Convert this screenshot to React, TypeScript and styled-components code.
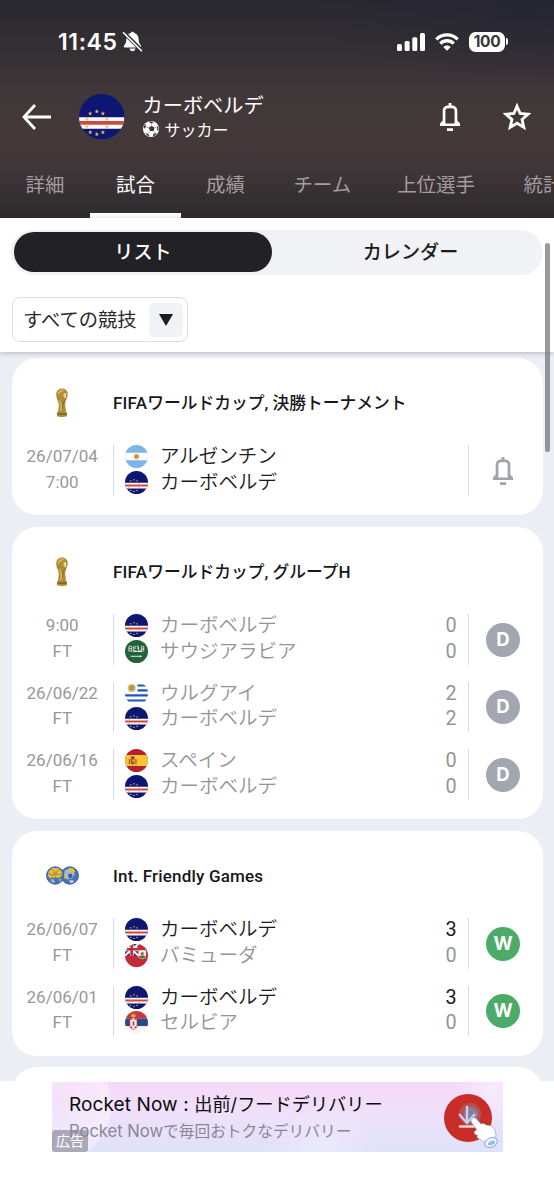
import React from 'react';
import styled, { createGlobalStyle } from 'styled-components';

const jp = `'Noto Sans CJK JP', sans-serif`;
const latin = `Roboto, 'Noto Sans CJK JP', sans-serif`;

const GlobalStyle = createGlobalStyle`
  * { box-sizing: border-box; }
  body { margin: 0; background: #fff; font-family: ${jp}; color: #1c1c20; }
  svg { display: block; flex: none; }
`;

const Screen = styled.div`
  position: relative;
  width: 554px;
  height: 1200px;
  overflow: hidden;
  display: flex;
  flex-direction: column;
  background: #ebeef4;
`;

const Header = styled.header`
  flex: none;
  height: 218px;
  display: flex;
  flex-direction: column;
  color: #fff;
  background:
    radial-gradient(ellipse 260px 90px at 100% 0, rgba(32, 33, 54, 0.55), transparent),
    linear-gradient(#2a2830 0, #343033 50px, #40373a 90px, #43393a 130px, #41373a 165px, #2d2a2d 218px);
`;

const StatusBar = styled.div`
  height: 83px;
  padding: 0 46px 0 58px;
  display: flex;
  align-items: center;
`;

const Clock = styled.span`
  font: 600 23px/26px Inter, sans-serif;
  letter-spacing: 0.6px;
  width: 64px;
`;

const StatusIcons = styled.div`
  margin-left: auto;
  display: flex;
  align-items: center;
  gap: 10px;
`;

const Battery = styled.div`
  display: flex;
  align-items: center;
  gap: 1px;
`;

const BatteryBody = styled.span`
  width: 36px;
  height: 20px;
  border-radius: 6.5px;
  background: #fff;
  color: #37323a;
  font: 700 15.5px/20px Inter, sans-serif;
  letter-spacing: -0.4px;
  text-align: center;
`;

const BatteryNub = styled.span`
  width: 2px;
  height: 7px;
  border-radius: 0 3px 3px 0;
  background: #fff;
`;

const TeamBar = styled.div`
  height: 68px;
  padding: 0 23px 0 22px;
  display: flex;
  align-items: center;
`;

const TeamLogo = styled.div`
  margin-left: 28px;
`;

const TeamHeading = styled.div`
  margin-left: 18px;
  display: flex;
  flex-direction: column;
`;

const TeamTitle = styled.h1`
  margin: 0;
  font: 400 20.2px/26px ${jp};
`;

const Sport = styled.div`
  display: flex;
  align-items: center;
  gap: 6px;
  font-size: 16px;
  line-height: 22px;
  padding-bottom: 2px;
`;

const TeamActions = styled.div`
  margin-left: auto;
  display: flex;
  align-items: center;
  gap: 43px;
`;

const Tabs = styled.nav`
  height: 67px;
  display: flex;
  overflow: hidden;
`;

const Tab = styled.a<{ $width: number; $active?: boolean }>`
  flex: none;
  width: ${p => p.$width}px;
  padding-top: 18px;
  border-bottom: 5px solid ${p => (p.$active ? '#fff' : 'transparent')};
  font-size: 19.4px;
  line-height: 30px;
  text-align: center;
  white-space: nowrap;
  color: ${p => (p.$active ? '#fff' : '#a39da0')};
`;

const Filters = styled.section`
  position: relative;
  flex: none;
  height: 134px;
  padding: 12px 11px 10px;
  background: #fff;
  box-shadow: 0 1px 5px rgba(60, 65, 85, 0.32);
`;

const Segmented = styled.div`
  height: 44.5px;
  padding: 2px 3px;
  display: flex;
  border-radius: 23px;
  background: #f1f2f6;
`;

const Segment = styled.button<{ $active?: boolean }>`
  flex: ${p => (p.$active ? '0 0 258px' : '1')};
  height: 40px;
  border: 0;
  padding: 0 0 2px ${p => (p.$active ? 0 : 9)}px;
  border-radius: 20px;
  font: 500 19.1px/36px ${jp};
  background: ${p => (p.$active ? '#212126' : 'transparent')};
  color: ${p => (p.$active ? '#fff' : '#1c1c20')};
`;

const Select = styled.div`
  margin: 22.5px 0 0 0.5px;
  width: 176.5px;
  height: 45px;
  padding: 0 4px 0 10.5px;
  display: flex;
  align-items: center;
  justify-content: space-between;
  border: 1px solid #dcdce0;
  border-radius: 8px;
`;

const SelectValue = styled.span`
  padding-bottom: 2px;
  font-size: 19.3px;
  line-height: 38px;
  color: #2a2a2e;
`;

const SelectArrow = styled.span`
  width: 34px;
  height: 34px;
  display: flex;
  align-items: center;
  justify-content: center;
  border-radius: 5px;
  background: #f0f2f6;
`;

const CardList = styled.main`
  flex: 1;
  min-height: 0;
  overflow: hidden;
  padding: 6px 11.5px 0;
  display: flex;
  flex-direction: column;
  gap: 11.6px;
`;

const Card = styled.section`
  flex: none;
  padding-bottom: 19.3px;
  border-radius: 25px;
  background: #fff;
`;

const CardHeader = styled.div`
  height: 87.3px;
  padding-top: 2px;
  display: flex;
  align-items: center;
`;

const CardIcon = styled.div`
  width: 101.5px;
  display: flex;
  justify-content: center;
`;

const CardTitle = styled.h2`
  margin: 0;
  font: 500 16.75px/24px ${latin};
  color: #17171b;
  white-space: pre;
`;

const Latin = styled.span<{ $size?: number; $spacing?: number }>`
  font-size: ${p => p.$size ?? 17}px;
  letter-spacing: ${p => p.$spacing ?? 0}px;
`;

const MatchList = styled.div`
  display: flex;
  flex-direction: column;
  gap: 16.9px;
`;

const Match = styled.div`
  height: 50.7px;
  display: grid;
  grid-template-columns: 101.5px 1fr 74px;
`;

const Schedule = styled.div`
  display: flex;
  flex-direction: column;
  align-items: center;
  font: 400 17px/25.4px ${latin};
  color: #97979b;
  margin-top: -1px;
`;

const Sides = styled.div`
  border: solid #dadade;
  border-width: 0 1px;
  padding: 0 11px;
`;

const Side = styled.div<{ $strong?: boolean }>`
  height: 25.35px;
  display: flex;
  align-items: flex-start;
  font-weight: 350;
  color: ${p => (p.$strong ? '#1a1a1e' : '#949498')};
`;

const SideName = styled.span`
  margin-left: 12px;
  font-size: 19.5px;
  line-height: 20px;
`;

const Score = styled.span`
  margin-left: auto;
  font: 400 19.8px/23px Roboto, sans-serif;
`;

const Outcome = styled.div`
  display: flex;
  align-items: center;
  justify-content: center;
  padding-right: 5px;
`;

const Badge = styled.span<{ $win?: boolean }>`
  width: 34px;
  height: 34px;
  border-radius: 50%;
  font: 700 18.5px/33px Inter, sans-serif;
  text-align: center;
  color: #fff;
  background: ${p => (p.$win ? '#4dab68' : '#a2a6b0')};
`;

const ScrollThumb = styled.div`
  position: absolute;
  right: 4px;
  top: 243px;
  width: 5px;
  height: 209px;
  border-radius: 3px;
  background: rgba(115, 115, 118, 0.72);
`;

const AdArea = styled.footer`
  flex: none;
  height: 119px;
  padding: 1px 51px 0 52px;
  background: #fff;
`;

const Banner = styled.div`
  position: relative;
  height: 70px;
  padding: 0 5px 0 17px;
  display: flex;
  align-items: center;
  justify-content: space-between;
  overflow: hidden;
  background:
    radial-gradient(circle at 2px 23px, rgba(255, 255, 255, 0.1) 0, rgba(255, 255, 255, 0.4) 56px, transparent 58px),
    radial-gradient(circle at 270px 80px, rgba(255, 255, 255, 0.35) 0, transparent 60px),
    radial-gradient(circle at 440px 10px, rgba(255, 255, 255, 0.45) 0, transparent 34px),
    linear-gradient(#f5d9f8, #efe0fa 45%, #dfe1fa);
`;

const AdCopy = styled.div`
  padding-top: 2px;
  white-space: pre;
`;

const AdTitle = styled.div`
  font: 400 18.2px/26px Inter, ${jp};
  color: #0c0b10;
`;

const AdText = styled.div`
  font: 400 15.7px/26px Inter, ${jp};
  color: #8b8595;
`;

const DownloadSlot = styled.div`
  padding-top: 3px;
`;

const AdTag = styled.span`
  position: absolute;
  left: 0;
  bottom: 0;
  width: 36px;
  height: 22px;
  border-radius: 3px;
  background: rgba(140, 136, 153, 0.68);
  color: #fff;
  font: 400 14px/21px ${jp};
  text-align: center;
`;

const ringStars = [
  [9.4, 9.2], [12.6, 10.3], [5.9, 10.3], [14.7, 13.2], [4.1, 13.2],
  [14.7, 17.1], [4.1, 17.1], [12.6, 20.2], [5.9, 20.2], [9.4, 21.2],
];

const starPoints = (cx: number, cy: number, r: number, inner = 0.4) =>
  Array.from({ length: 10 }, (_, i) => {
    const a = (Math.PI / 5) * i - Math.PI / 2;
    const d = i % 2 ? r * inner : r;
    return `${(cx + d * Math.cos(a)).toFixed(2)},${(cy + d * Math.sin(a)).toFixed(2)}`;
  }).join(' ');

type Country = 'cv' | 'ar' | 'sa' | 'uy' | 'es' | 'bm' | 'rs';

const flagArt: Record<Country, React.ReactNode> = {
  cv: (
    <>
      <path fill="#0d1673" d="M0 0h24v24H0z" />
      <path fill="#fff" d="M0 12.2h24v6.1H0z" />
      <path fill="#d0493f" d="M0 14.2h24v2H0z" />
      {ringStars.map(([x, y]) => (
        <polygon key={`${x}-${y}`} points={starPoints(x, y, 1.25)} fill="#efc34d" />
      ))}
    </>
  ),
  ar: (
    <>
      <path fill="#7db5e6" d="M0 0h24v24H0z" />
      <path fill="#fff" d="M0 8h24v8H0z" />
      <circle cx="12" cy="12" r="3" fill="#e0b868" />
      <circle cx="12" cy="12" r="1.8" fill="#c58f3e" />
    </>
  ),
  sa: (
    <>
      <path fill="#23623a" d="M0 0h24v24H0z" />
      <path d="M4 7v4.500h3V7M9 6.500v4.800h3M10.500 6v3.500M14 6.500v5h3V7M19.500 6.500v5M4.500 9h2M12.500 8.500H14M17 9.500h3M4 6.500h3M8 12h11M12 6.500h2M17 6.500h2" fill="none" stroke="#fff" strokeWidth="1" opacity=".8" />
      <path d="M6 17h11.500M16 16.200V18" stroke="#fff" strokeWidth=".9" />
    </>
  ),
  uy: (
    <>
      <path fill="#f8fafc" d="M0 0h24v24H0z" />
      <path d="M13 3.700H24M13 8.700H24M0 14h24M0 19.300h24" stroke="#2455b8" strokeWidth="2.200" />
      <circle cx="7" cy="6.200" r="4.200" fill="#d8c078" />
      <circle cx="7" cy="6.200" r="2.700" fill="#b8953f" />
    </>
  ),
  es: (
    <>
      <path fill="#b6202a" d="M0 0h24v24H0z" />
      <path fill="#f8c42f" d="M0 6.300h24v11.400H0z" />
      <path fill="#a9552d" d="M4 10.500h1.300V16H4zM10.800 10.500h1.300V16h-1.300zM6 9.500h4V15l-2 1.500L6 15z" />
      <path fill="#7d3c26" d="M6.200 7.800h3.600v1.500H6.200z" />
      <path fill="#e8b9a0" d="M8 11h1.600v2H8z" />
    </>
  ),
  bm: (
    <>
      <path fill="#c42a35" d="M0 0h24v24H0z" />
      <path fill="#2b2f7b" d="M0 0h13.500v12H0z" />
      <path d="M0 0l14 12M14 0L0 12" stroke="#fff" strokeWidth="2" />
      <path d="M7 0v12M0 5.500h13.500" stroke="#fff" strokeWidth="4.200" />
      <path d="M7 0v12M0 5.500h13.500" stroke="#c42a35" strokeWidth="2.800" />
      <path fill="#f5f3f0" d="M14 6.500h8V14l-4 2-4-2z" />
      <path fill="#3f7545" d="M14.500 12.500h7v1.300L18 15.500l-3.500-1.700z" />
      <path fill="#9c6b4c" d="M16.500 8.600h3v3.600h-3z" />
    </>
  ),
  rs: (
    <>
      <path fill="#c4383f" d="M0 0h24v8H0z" />
      <path fill="#28498a" d="M0 8h24v8H0z" />
      <path fill="#f6f6f8" d="M0 16h24v8H0z" />
      <path fill="#d9a84a" d="M6.200 3l1.200 1L8.700 2.500 10 4l1.200-1-.5 3.500h-4z" />
      <path fill="#c4383f" d="M4.800 7.400h8v9.500l-4 3-4-3z" />
      <path fill="#f3e6e4" d="M5.400 8.500l2.200 1.200V7.500h2.400v2.200l2.200-1.200v8.300l-2-1v3h-2.800v-3l-2 1z" />
      <path fill="#c4383f" d="M8 11h1.700v4H8z" />
    </>
  ),
};

const Flag = ({ code, size = 23 }: { code: Country; size?: number }) => {
  const id = React.useId();
  return (
    <svg width={size} height={size} viewBox="0 0 24 24">
      <clipPath id={id}><circle cx="12" cy="12" r="12" /></clipPath>
      <g clipPath={`url(#${id})`}>{flagArt[code]}</g>
    </svg>
  );
};

const Bell = ({ color }: { color: string }) => (
  <svg width="20" height="28" viewBox="0 0 20 28" fill={color}>
    <path d="M8.600 0h2.800v3.500H8.600zM7 25.300h6V28H7z" />
    <path fillRule="evenodd" d="M8 2.500h4c3.200 0 5.300 2.200 5.300 5.300v9.700L20 20.500V23H0v-2.500l2.700-3V7.800c0-3.100 2.100-5.300 5.300-5.300zM8 5.200C6.300 5.200 5.400 6.200 5.400 7.800v12.600h9.200V7.800c0-1.600-.9-2.600-2.600-2.600z" />
  </svg>
);

const MutedBell = () => (
  <svg width="21" height="21" viewBox="0 0 21 21">
    <path fill="#fff" d="M10.500.8c.9 0 1.500.5 1.700 1.200 3 .8 4.300 3 4.400 6 .1 3.500 1 4.800 2.300 6.400.7 1 .3 2-.9 2H3c-1.200 0-1.600-1-.9-2C3.500 12.800 4.300 11.500 4.400 8c.1-3 1.400-5.200 4.400-6 .2-.7.800-1.200 1.700-1.200zM7.500 17.600h6c-.3 1.700-1.400 2.600-3 2.600s-2.700-.9-3-2.600z" />
    <path d="M1.800 1.600l18.200 18.200" stroke="#38343a" strokeWidth="3.800" />
    <path d="M1.500 1.800l18 17.900" stroke="#fff" strokeWidth="1.600" strokeLinecap="round" />
  </svg>
);

const Signal = () => (
  <svg width="28" height="18" viewBox="0 0 28 18" fill="#fff">
    <rect x="0" y="11" width="5" height="7" rx="1.500" />
    <rect x="7.600" y="8" width="5" height="10" rx="1.500" />
    <rect x="15.300" y="4.300" width="5" height="13.700" rx="1.500" />
    <rect x="23" y="0" width="5" height="18" rx="1.500" />
  </svg>
);

const Wifi = () => (
  <svg width="24" height="18" viewBox="0 0 24 18" fill="none" stroke="#fff" strokeWidth="3.300">
    <path d="M1.300 6.400c6-6 15.400-6 21.400 0" />
    <path d="M5.300 10.600c3.800-3.800 9.600-3.800 13.400 0" />
    <path d="M8.300 13.900c2.200-2 5.200-2 7.400 0L12 17.700z" fill="#fff" stroke="none" />
  </svg>
);

const BackArrow = () => (
  <svg width="29" height="26" viewBox="0 0 29 26" fill="none" stroke="#fff" strokeWidth="2.800">
    <path d="M13 1L2 13l11 12M2 13h27" />
  </svg>
);

const StarIcon = () => (
  <svg width="28" height="28" viewBox="0 0 28 28">
    <polygon points={starPoints(14, 14.8, 11.6, 0.46)} fill="none" stroke="#fff" strokeWidth="2.900" />
  </svg>
);

const SoccerBall = ({ size = 16 }: { size?: number }) => (
  <svg width={size} height={size} viewBox="0 0 16 16">
    <circle cx="8" cy="8" r="8" fill="#fff" />
    <g fill="#423839">
      <path d="M8.600 4.700l3 2-1 3.400H7L5.700 6.800zM5 .8l3-.5 2.600 1L8.600 2.500zM.5 6l1.700-3.200L3 5.400 1.700 7.800zM2.400 12l2.900.9 1.300 2.400-2.400-.8zM10.300 13l2.700-1 1 .4-2 2.200-2 .8zM14 5l1.200 1 .3 3-1.200 1z" />
    </g>
    <path d="M8.600 4.700V2M11.600 6.700L14.300 6M10.600 10.100l1.600 2.400M7 10.100l-1.500 3M5.700 6.800L2.500 6" stroke="#8b8585" strokeWidth=".6" />
  </svg>
);

const Trophy = () => (
  <svg width="14" height="29" viewBox="0 0 14 30">
    <path fill="#b08d35" d="M7 .5c3.700 0 6 2.600 6 6 0 2.300-1 4-1.800 6-.8 2.300-1.200 4.500-.6 7.500l.4 4 1.200 2v3.200c-3 .9-7.400.9-10.400 0V26L3 24l.5-4c.4-3-.2-5-1.200-7.500C1.500 10.500 1 9 1 6.500c0-3.400 2.300-6 6-6z" />
    <path fill="#d2b55c" d="M4 3c2-1.700 4-1.600 5.500-.7-2 .5-2.500 2-4.500 2.700-.5 1.800-1.500 2-2.600 1.500C2.500 5 3 4 4 3zM8.500 5.500c1.500-.5 3 0 3.300 1.500-.3 1.500-1.500 2-2.500 3L8 8zM6 12l2 5-1.500 7H5c.8-4 .6-8-1.500-12z" />
    <path d="M2.500 10c2 2 5 4 5.500 8M11.500 11c-2.500 1.500-4 5-4 10" stroke="#7f6420" strokeWidth=".8" fill="none" />
    <path d="M2.200 26.500c3 .7 6.600.7 9.600 0" stroke="#6d5a22" strokeWidth="1.200" fill="none" />
    <path d="M10.200 5.500l.2 5" stroke="#f5ecd0" strokeWidth="1.300" />
  </svg>
);

const FriendlyBalls = () => (
  <svg width="33" height="19" viewBox="0 0 33 19">
    <g transform="translate(23.800 9.500)">
      <circle r="9" fill="#4a72b0" />
      <path fill="#9fbbdc" d="M-5-5l4-2 4 1.500L5-1 2 3l-5 1-3-3z" />
      <path fill="#e3c04a" d="M-1-7.500l4 0 2.500 3.500L3-2-1-4zM-7.500-1l3-.5L-3 2l-3 1.500z" />
      <path fill="#3d5f9d" d="M-1.500-1.500L1.500-2 3 .5 1 3-1.500 2z" />
      <path fill="#b9cee6" d="M-1 5l4-.5 1.500 2L1 8z" />
      <circle r="8.600" fill="none" stroke="#3f609a" strokeWidth=".8" />
    </g>
    <g transform="translate(9.200 9.500)">
      <circle r="9" fill="#4a72b0" />
      <path fill="#e6c03c" d="M-6.500-4L-3-7.500 3-7.500 6.500-4 7 0 3.500 2.500-1 2-5 3-7.500 0z" />
      <path fill="#c39a31" d="M-1.500-4L2-4 3-1 .5 1-2.500-.5z" />
      <path fill="#8fb0d8" d="M-5 4l3.500-.5L0 7l-3 .5zM3 4l3.500-1L5 6.500z" />
      <path d="M-7-2l4.500 1.500L-4 4M-1.500-4L-3.500-7M2-4l2-3M3-1h4M.5 1L1 7" stroke="#5d6c70" strokeWidth=".6" fill="none" />
      <circle r="8.600" fill="none" stroke="#3f609a" strokeWidth=".8" />
    </g>
  </svg>
);

const DownloadButton = () => (
  <svg width="56" height="62" viewBox="0 0 56 62">
    <circle cx="26" cy="30" r="24" fill="#c92d27" />
    <circle cx="28" cy="26" r="11" fill="#9c8798" opacity=".4" />
    <circle cx="29" cy="26" r="7" fill="#7898c8" opacity=".6" />
    <path d="M25 18v17M17 26l8 9 8-9" fill="none" stroke="#bfd4f4" strokeWidth="2.400" />
    <path d="M17 38.500h16" stroke="#f5dfe2" strokeWidth="2.400" />
    <path d="M30 30.500c-1.800 1.500-1 3.300.3 5l4.600 6.500c-2 .5-3 1.500-2.600 3 .5 1.600 1.800 2 3.200 2-1 1.600-.3 3.400 2 4 2.500 1.600 5 3.300 7.500 4.200L54 48c-.3-4-1.200-8-4-9.500-2-1.300-4.500-1-6-1.500-1.500-1.600-3.500-1.500-5-1l-4.500-5c-1.400-1.500-3-1.700-4.500-.5z" fill="#fff" stroke="#86acd9" strokeWidth=".7" />
    <ellipse cx="49" cy="54.500" rx="6.500" ry="4.500" transform="rotate(-25 49 54.500)" fill="#f2f8ff" stroke="#86acd9" strokeWidth="1" />
    <ellipse cx="49.500" cy="55" rx="3.800" ry="2" transform="rotate(-25 49.500 55)" fill="#8dbbec" />
  </svg>
);

interface Team { code: Country; name: string; score?: number; strong?: boolean }
interface Fixture { when: string; status: string; teams: Team[]; result?: 'D' | 'W' }
interface Group { key: string; icon: React.ReactNode; title: React.ReactNode; fixtures: Fixture[] }

const capeVerde = (score?: number, strong?: boolean): Team => ({ code: 'cv', name: 'カーボベルデ', score, strong });

const groups: Group[] = [
  {
    key: 'knockout',
    icon: <Trophy />,
    title: <><Latin $spacing={0.2}>FIFA</Latin>ワールドカップ<Latin>, </Latin>決勝トーナメント</>,
    fixtures: [
      { when: '26/07/04', status: '7:00', teams: [{ code: 'ar', name: 'アルゼンチン', strong: true }, capeVerde(undefined, true)] },
    ],
  },
  {
    key: 'group-h',
    icon: <Trophy />,
    title: <><Latin $spacing={0.2}>FIFA</Latin>ワールドカップ<Latin>, </Latin>グループ<Latin>H</Latin></>,
    fixtures: [
      { when: '9:00', status: 'FT', result: 'D', teams: [capeVerde(0), { code: 'sa', name: 'サウジアラビア', score: 0 }] },
      { when: '26/06/22', status: 'FT', result: 'D', teams: [{ code: 'uy', name: 'ウルグアイ', score: 2 }, capeVerde(2)] },
      { when: '26/06/16', status: 'FT', result: 'D', teams: [{ code: 'es', name: 'スペイン', score: 0 }, capeVerde(0)] },
    ],
  },
  {
    key: 'friendly',
    icon: <FriendlyBalls />,
    title: <Latin $spacing={0.18}>Int. Friendly Games</Latin>,
    fixtures: [
      { when: '26/06/07', status: 'FT', result: 'W', teams: [capeVerde(3, true), { code: 'bm', name: 'バミューダ', score: 0 }] },
      { when: '26/06/01', status: 'FT', result: 'W', teams: [capeVerde(3, true), { code: 'rs', name: 'セルビア', score: 0 }] },
    ],
  },
];

const MatchRow = ({ fixture }: { fixture: Fixture }) => (
  <Match>
    <Schedule>
      <span>{fixture.when}</span>
      <span>{fixture.status}</span>
    </Schedule>
    <Sides>
      {fixture.teams.map(team => (
        <Side key={team.name} $strong={team.strong}>
          <Flag code={team.code} />
          <SideName>{team.name}</SideName>
          {team.score !== undefined && <Score>{team.score}</Score>}
        </Side>
      ))}
    </Sides>
    <Outcome>
      {fixture.result ? <Badge $win={fixture.result === 'W'}>{fixture.result}</Badge> : <Bell color="#9fa3ac" />}
    </Outcome>
  </Match>
);

export default function App() {
  return (
    <>
      <GlobalStyle />
      <Screen>
        <Header>
          <StatusBar>
            <Clock>11:45</Clock>
            <MutedBell />
            <StatusIcons>
              <Signal />
              <Wifi />
              <Battery>
                <BatteryBody>100</BatteryBody>
                <BatteryNub />
              </Battery>
            </StatusIcons>
          </StatusBar>
          <TeamBar>
            <BackArrow />
            <TeamLogo><Flag code="cv" size={45.5} /></TeamLogo>
            <TeamHeading>
              <TeamTitle>カーボベルデ</TeamTitle>
              <Sport><SoccerBall />サッカー</Sport>
            </TeamHeading>
            <TeamActions>
              <Bell color="#fff" />
              <StarIcon />
            </TeamActions>
          </TeamBar>
          <Tabs>
            <Tab $width={90}>詳細</Tab>
            <Tab $width={91} $active>試合</Tab>
            <Tab $width={89}>成績</Tab>
            <Tab $width={104.5}>チーム</Tab>
            <Tab $width={123}>上位選手</Tab>
            <Tab $width={91}>統計</Tab>
          </Tabs>
        </Header>
        <Filters>
          <Segmented>
            <Segment $active>リスト</Segment>
            <Segment>カレンダー</Segment>
          </Segmented>
          <Select>
            <SelectValue>すべての競技</SelectValue>
            <SelectArrow>
              <svg width="14" height="12" viewBox="0 0 14 12"><path d="M0 0h14L7 12z" fill="#1c1c20" /></svg>
            </SelectArrow>
          </Select>
        </Filters>
        <CardList>
          {groups.map(group => (
            <Card key={group.key}>
              <CardHeader>
                <CardIcon>{group.icon}</CardIcon>
                <CardTitle>{group.title}</CardTitle>
              </CardHeader>
              <MatchList>
                {group.fixtures.map(f => <MatchRow key={f.when} fixture={f} />)}
              </MatchList>
            </Card>
          ))}
          <Card><CardHeader /></Card>
        </CardList>
        <AdArea>
          <Banner>
            <AdCopy>
              <AdTitle><Latin $size={19} $spacing={0.1}>Rocket Now : </Latin>出前/フードデリバリー</AdTitle>
              <AdText><Latin $size={16.6}>Rocket Now</Latin>で毎回おトクなデリバリー</AdText>
            </AdCopy>
            <DownloadSlot><DownloadButton /></DownloadSlot>
            <AdTag>広告</AdTag>
          </Banner>
        </AdArea>
        <ScrollThumb />
      </Screen>
    </>
  );
}
